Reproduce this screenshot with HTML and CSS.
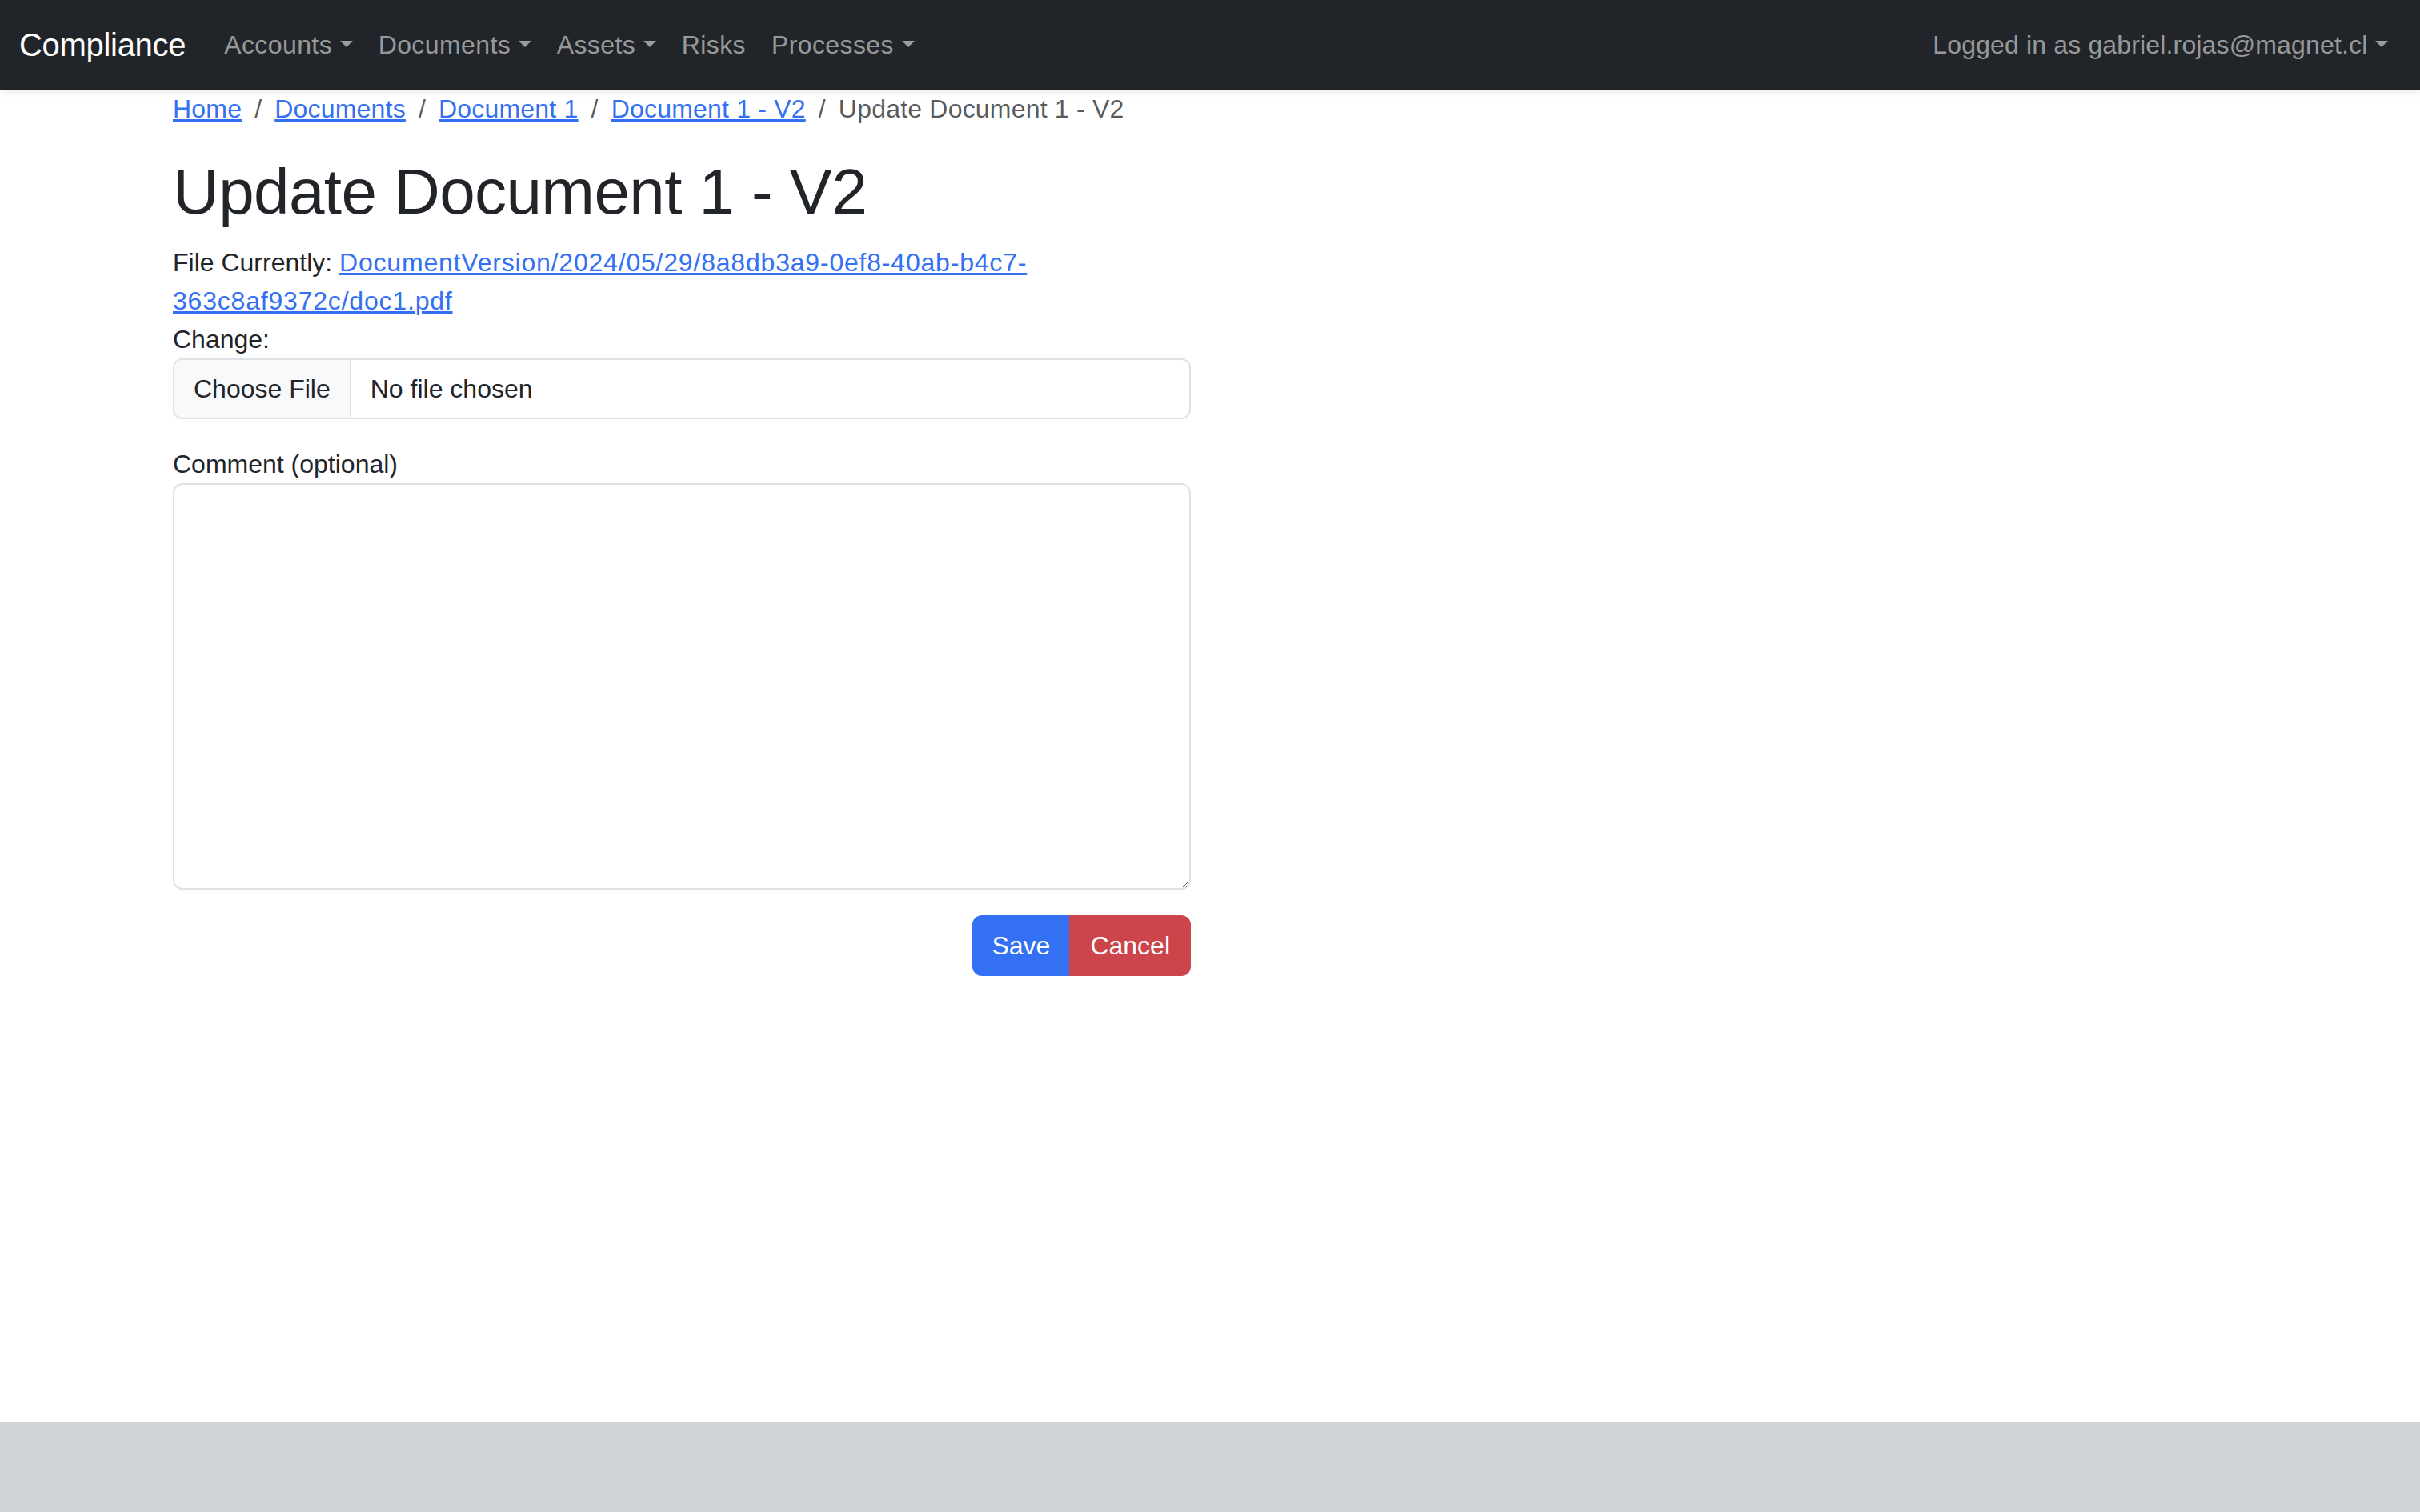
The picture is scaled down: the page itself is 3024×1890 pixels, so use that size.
FILE: index.html
```html
<!DOCTYPE html>
<html lang="en">
<head>
<meta charset="utf-8">
<title>Update Document 1 - V2</title>
<link rel="stylesheet" href="styles.css">
</head>
<body>
<nav class="navbar">
  <div class="navbar-inner">
    <a class="brand" href="#">Compliance</a>
    <ul class="nav nav-main">
      <li><a class="nav-link dropdown" href="#">Accounts</a></li>
      <li><a class="nav-link dropdown" href="#">Documents</a></li>
      <li><a class="nav-link dropdown" href="#">Assets</a></li>
      <li><a class="nav-link" href="#">Risks</a></li>
      <li><a class="nav-link dropdown" href="#">Processes</a></li>
    </ul>
    <ul class="nav nav-right">
      <li><a class="nav-link dropdown" href="#">Logged in as gabriel.rojas@magnet.cl</a></li>
    </ul>
  </div>
</nav>

<main class="main">
  <div class="container">
    <ol class="breadcrumb">
      <li class="crumb"><a href="#">Home</a></li>
      <li class="crumb"><a href="#">Documents</a></li>
      <li class="crumb"><a href="#">Document 1</a></li>
      <li class="crumb"><a href="#">Document 1 - V2</a></li>
      <li class="crumb active">Update Document 1 - V2</li>
    </ol>

    <h1 class="title">Update Document 1 - V2</h1>

    <div class="row">
      <form class="col">
        <div class="field">
          File Currently: <a class="file-link" href="#">DocumentVersion/2024/05/29/8a8db3a9-0ef8-40ab-b4c7-363c8af9372c/doc1.pdf</a><br>
          Change:
          <input type="file" class="file-input">
        </div>
        <div class="field">
          <label class="label" for="comment">Comment (optional)</label>
          <textarea id="comment" class="textarea" rows="10"></textarea>
        </div>
        <div class="actions">
          <div class="btn-group">
            <button type="submit" class="btn btn-save">Save</button>
            <a href="#" class="btn btn-cancel">Cancel</a>
          </div>
        </div>
      </form>
    </div>
  </div>
</main>

<footer class="footer"></footer>
</body>
</html>
```

FILE: styles.css
```css
* { box-sizing: border-box; }

html, body {
  margin: 0;
  padding: 0;
}

body {
  font-family: "Liberation Sans", Arial, sans-serif;
  font-size: 32px;
  line-height: 48px;
  color: #212529;
  background: #ffffff;
  min-height: 100vh;
  display: flex;
  flex-direction: column;
}

a { color: #3470f3; }

/* Navbar */
.navbar {
  background: #212529;
  padding: 16px 0;
  box-shadow: 0 4px 8px rgba(0, 0, 0, 0.075);
  position: relative;
  z-index: 2;
}

.navbar-inner {
  display: flex;
  align-items: center;
  padding: 0 24px;
}

.brand {
  color: #ffffff;
  text-decoration: none;
  font-size: 40px;
  line-height: 60px;
  padding: 10px 0;
  margin-right: 32px;
  letter-spacing: -0.3px;
}

.nav {
  list-style: none;
  margin: 0;
  padding: 0;
  display: flex;
}

.nav-main .nav-link { letter-spacing: 0.4px; }

.nav-right { margin-left: auto; }

.nav-right .nav-link { letter-spacing: 0.15px; }

.nav-link {
  display: block;
  color: rgba(255, 255, 255, 0.55);
  text-decoration: none;
  padding: 8px 16px;
  line-height: 48px;
}

.dropdown::after {
  content: "";
  display: inline-block;
  margin-left: 0.3em;
  vertical-align: 0.255em;
  border-top: 0.28em solid;
  border-right: 0.28em solid transparent;
  border-left: 0.28em solid transparent;
  border-bottom: 0;
}

/* Main */
.main { flex: 1; }

.container {
  max-width: 2640px;
  margin: 0 auto;
  padding: 0 24px;
}

.breadcrumb {
  list-style: none;
  display: flex;
  flex-wrap: wrap;
  margin: 0 0 32px;
  padding: 0;
  letter-spacing: 0.2px;
}

.crumb + .crumb { padding-left: 16px; }

.crumb + .crumb::before {
  content: "/";
  float: left;
  padding-right: 16px;
  color: rgba(33, 37, 41, 0.75);
}

.crumb.active { color: rgba(33, 37, 41, 0.75); }

.title {
  font-size: 80px;
  line-height: 96px;
  font-weight: 500;
  letter-spacing: -0.6px;
  margin: 0 0 16px;
}

.row {
  display: flex;
  margin: 0 -24px;
}

.col {
  width: 50%;
  padding: 0 24px;
}

.field { margin-bottom: 32px; }

.file-link { letter-spacing: 0.8px; }

.file-input {
  display: block;
  width: 100%;
  font: inherit;
  line-height: 48px;
  color: #212529;
  background: #ffffff;
  border: 2px solid #dee2e6;
  border-radius: 12px;
  padding: 12px 24px;
  overflow: hidden;
}

.file-input::file-selector-button {
  font: inherit;
  line-height: 48px;
  color: #212529;
  background: #f8f9fa;
  padding: 12px 24px;
  margin: -12px 24px -12px -24px;
  border: 0;
  border-right: 2px solid #dee2e6;
  border-radius: 0;
}

.label { display: block; }

.textarea {
  display: block;
  width: 100%;
  font: inherit;
  line-height: 48px;
  color: #212529;
  border: 2px solid #dee2e6;
  border-radius: 12px;
  padding: 12px 24px;
  margin: 0;
  resize: vertical;
}

.actions {
  display: flex;
  justify-content: flex-end;
}

.btn-group { display: inline-flex; }

.btn {
  font: inherit;
  line-height: 48px;
  padding: 12px 22px;
  border: 2px solid transparent;
  color: #ffffff;
  text-decoration: none;
  cursor: pointer;
}

.btn-save {
  background: #3470f3;
  border-color: #3470f3;
  border-radius: 12px 0 0 12px;
}

.btn-cancel {
  background: #cb454b;
  border-color: #cb454b;
  border-radius: 0 12px 12px 0;
  padding: 12px 24px;
}

/* Footer */
.footer {
  height: 112px;
  background: #cfd4d9;
}
```
